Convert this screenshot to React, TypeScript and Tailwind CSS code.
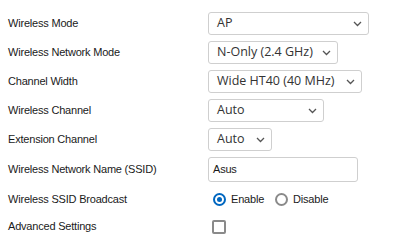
import React from 'react';

const labelFont = { fontFamily: '"Liberation Sans", sans-serif' };
const selectFont = { fontFamily: '"Open Sans", sans-serif' };

function Chevron() {
  return (
    <svg width="9" height="6" viewBox="0 0 9 6" className="shrink-0">
      <path d="M1 1l3.5 3.5L8 1" fill="none" stroke="#555" strokeWidth="1.3" />
    </svg>
  );
}

function FakeSelect({ value, width }: { value: string; width: string }) {
  return (
    <div
      className={`${width} h-[23px] flex items-center justify-between pl-[8px] pr-[6px] border border-[#cfcfcf] rounded-[3px] bg-white text-[12.5px] text-[#333]`}
      style={selectFont}
    >
      <span className="leading-none">{value}</span>
      <Chevron />
    </div>
  );
}

function Row({ label, height, children }: { label: string; height: string; children: React.ReactNode }) {
  return (
    <div className={`flex items-center ${height}`}>
      <div className="w-[208px] shrink-0 pl-[8px] text-[11px] tracking-[-0.2px] text-[#1a1a1a]" style={labelFont}>
        {label}
      </div>
      <div className="flex items-center">{children}</div>
    </div>
  );
}

export default function App() {
  return (
    <div className="w-[395px] h-[247px] bg-white pt-[9px]">
      <Row label="Wireless Mode" height="h-[29px]">
        <FakeSelect value="AP" width="w-[161px]" />
      </Row>
      <Row label="Wireless Network Mode" height="h-[29px]">
        <FakeSelect value="N-Only (2.4 GHz)" width="w-[130px]" />
      </Row>
      <Row label="Channel Width" height="h-[29px]">
        <FakeSelect value="Wide HT40 (40 MHz)" width="w-[154px]" />
      </Row>
      <Row label="Wireless Channel" height="h-[29px]">
        <FakeSelect value="Auto" width="w-[116px]" />
      </Row>
      <Row label="Extension Channel" height="h-[29px]">
        <FakeSelect value="Auto" width="w-[64px]" />
      </Row>
      <Row label="Wireless Network Name (SSID)" height="h-[31px]">
        <div
          className="w-[150px] h-[25px] flex items-center pl-[4px] border border-[#cfcfcf] rounded-[3px] text-[11px] tracking-[-0.2px] text-[#1a1a1a]"
          style={labelFont}
        >
          Asus
        </div>
      </Row>
      <Row label="Wireless SSID Broadcast" height="h-[29px]">
        <div className="flex items-center text-[11px] tracking-[-0.2px] text-[#1a1a1a]" style={labelFont}>
          <span className="ml-[5px] w-[13px] h-[13px] rounded-full border-[2px] border-[#0067c0] flex items-center justify-center">
            <span className="w-[5px] h-[5px] rounded-full bg-[#0067c0]" />
          </span>
          <span className="ml-[5px]">Enable</span>
          <span className="ml-[11px] w-[13px] h-[13px] rounded-full border-[2px] border-[#8a8a8a]" />
          <span className="ml-[5px]">Disable</span>
        </div>
      </Row>
      <Row label="Advanced Settings" height="h-[25px]">
        <span className="ml-[4px] w-[14px] h-[14px] rounded-[2px] border-[2px] border-[#8a8a8a]" />
      </Row>
    </div>
  );
}
